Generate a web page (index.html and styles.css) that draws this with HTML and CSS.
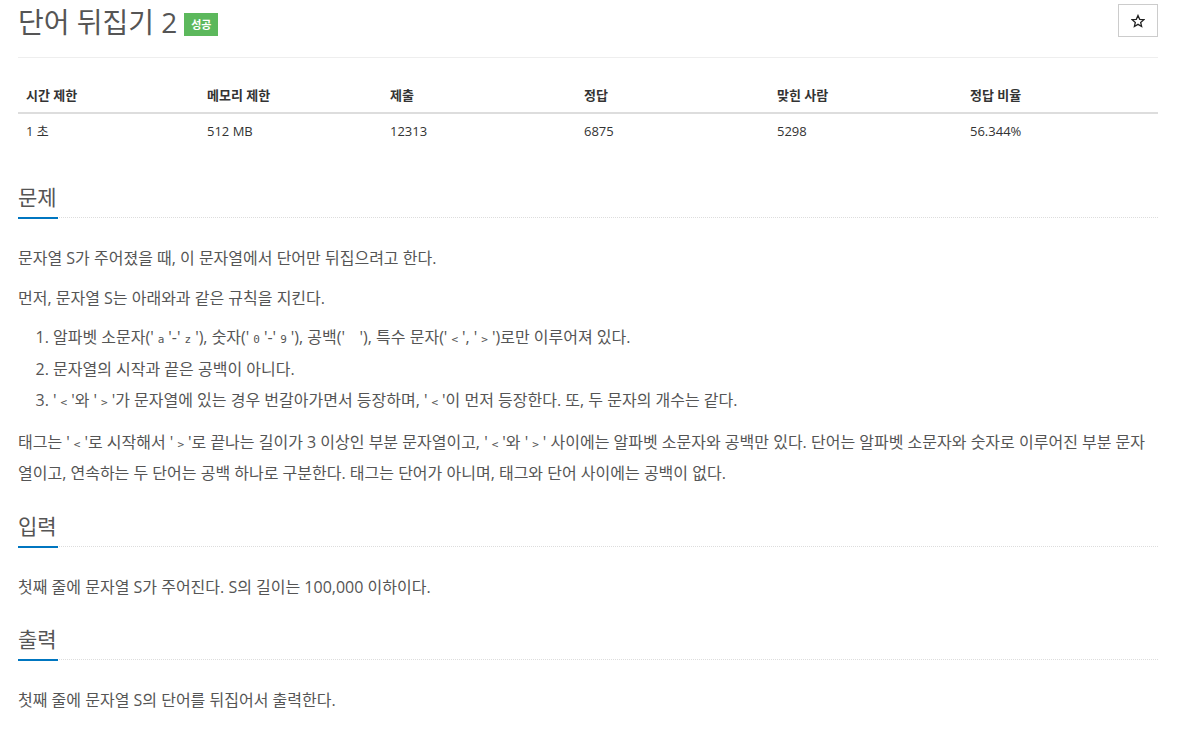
FILE: index.html
```html
<!DOCTYPE html>
<html lang="ko">
<head>
  <meta charset="UTF-8" />
  <title>단어 뒤집기 2</title>
  <link rel="stylesheet" href="styles.css">
</head>
<body>
  <div class="page">

    <div class="page-header">
      <h1 class="title">단어 뒤집기 2 <span class="badge">성공</span></h1>
      <button type="button" class="star-btn" aria-label="즐겨찾기">
        <svg width="14" height="14" viewBox="0 0 24 24"><path d="M12 2.5l2.9 6.6 7.1.6-5.4 4.7 1.6 7-6.2-3.7-6.2 3.7 1.6-7L2 9.7l7.1-.6z" fill="none" stroke="#222" stroke-width="2.2" stroke-linejoin="miter"/></svg>
      </button>
    </div>

    <table class="info-table">
      <thead>
        <tr>
          <th class="c1">시간 제한</th>
          <th class="c2">메모리 제한</th>
          <th class="c3">제출</th>
          <th class="c4">정답</th>
          <th class="c5">맞힌 사람</th>
          <th>정답 비율</th>
        </tr>
      </thead>
      <tbody>
        <tr>
          <td>1 초</td>
          <td>512 MB</td>
          <td>12313</td>
          <td>6875</td>
          <td>5298</td>
          <td>56.344%</td>
        </tr>
      </tbody>
    </table>

    <!-- 문제 -->
    <section class="section first">
      <div class="headline"><h2>문제</h2></div>
      <div class="problem-text">
        <p>문자열 S가 주어졌을 때, 이 문자열에서 단어만 뒤집으려고 한다.</p>
        <p>먼저, 문자열 S는 아래와과 같은 규칙을 지킨다.</p>
        <ol>
          <li>알파벳 소문자('<code>a</code>'-'<code>z</code>'), 숫자('<code>0</code>'-'<code>9</code>'), 공백('<code> </code>'), 특수 문자('<code>&lt;</code>', '<code>&gt;</code>')로만 이루어져 있다.</li>
          <li>문자열의 시작과 끝은 공백이 아니다.</li>
          <li>'<code>&lt;</code>'와 '<code>&gt;</code>'가 문자열에 있는 경우 번갈아가면서 등장하며, '<code>&lt;</code>'이 먼저 등장한다. 또, 두 문자의 개수는 같다.</li>
        </ol>
        <p>태그는 '<code>&lt;</code>'로 시작해서 '<code>&gt;</code>'로 끝나는 길이가 3 이상인 부분 문자열이고, '<code>&lt;</code>'와 '<code>&gt;</code>' 사이에는 알파벳 소문자와 공백만 있다. 단어는 알파벳 소문자와 숫자로 이루어진 부분 문자열이고, 연속하는 두 단어는 공백 하나로 구분한다. 태그는 단어가 아니며, 태그와 단어 사이에는 공백이 없다.</p>
      </div>
    </section>

    <!-- 입력 -->
    <section class="section">
      <div class="headline"><h2>입력</h2></div>
      <div class="problem-text">
        <p>첫째 줄에 문자열 S가 주어진다. S의 길이는 100,000 이하이다.</p>
      </div>
    </section>

    <!-- 출력 -->
    <section class="section">
      <div class="headline"><h2>출력</h2></div>
      <div class="problem-text">
        <p>첫째 줄에 문자열 S의 단어를 뒤집어서 출력한다.</p>
      </div>
    </section>

  </div>
</body>
</html>
```

FILE: styles.css
```css
body {
  margin: 0;
  font-family: "Open Sans", "Noto Sans CJK KR", sans-serif;
  color: #555;
  background: #fff;
}
.page {
  margin: 0 19px 0 18px;
}
.page-header {
  display: flex;
  justify-content: space-between;
  align-items: flex-start;
  padding: 2px 0 15px;
  border-bottom: 1px solid #eee;
}
.title {
  margin: 0;
  font-size: 28px;
  font-weight: 400;
  line-height: 40px;
  color: #555;
  display: flex;
  align-items: center;
}
.badge {
  display: inline-block;
  margin-left: 7px;
  margin-top: 4px;
  width: 34px;
  height: 23px;
  line-height: 23px;
  text-align: center;
  background: #5cb85c;
  color: #fff;
  font-size: 11px;
  font-weight: 700;
}
.star-btn {
  margin-top: 2px;
  width: 40px;
  height: 33px;
  border: 1px solid #ccc;
  background: #fff;
  padding: 0;
  display: flex;
  align-items: center;
  justify-content: center;
}
.info-table {
  width: 100%;
  margin-top: 20px;
  border-collapse: collapse;
  font-size: 13px;
  color: #333;
}
.info-table th,
.info-table td {
  text-align: left;
  padding: 8px;
  line-height: 18px;
}
.info-table th {
  font-weight: 700;
  border-bottom: 2px solid #ddd;
}
.info-table .c1 { width: 165px; }
.info-table .c2 { width: 167px; }
.info-table .c3 { width: 178px; }
.info-table .c4 { width: 177px; }
.info-table .c5 { width: 177px; }
.section {
  margin-top: 22px;
}
.section.first {
  margin-top: 35px;
}
.headline {
  border-bottom: 1px dotted #ddd;
  margin-bottom: 25px;
}
.headline h2 {
  display: inline-block;
  margin: 0 0 -2px;
  padding-bottom: 6px;
  border-bottom: 2px solid #0076c0;
  font-size: 21px;
  font-weight: 400;
  line-height: 28px;
  color: #555;
  min-width: 40px;
}
.problem-text {
  font-size: 16px;
  line-height: 31.5px;
}
.problem-text p {
  margin: 0 0 8px;
}
.problem-text ol {
  margin: 0 0 10px;
  padding-left: 35px;
}
code {
  font-family: "DejaVu Sans Mono", monospace;
  font-size: 11px;
  line-height: 1;
  margin: 0 4px;
  color: #555;
  white-space: pre;
}
```
